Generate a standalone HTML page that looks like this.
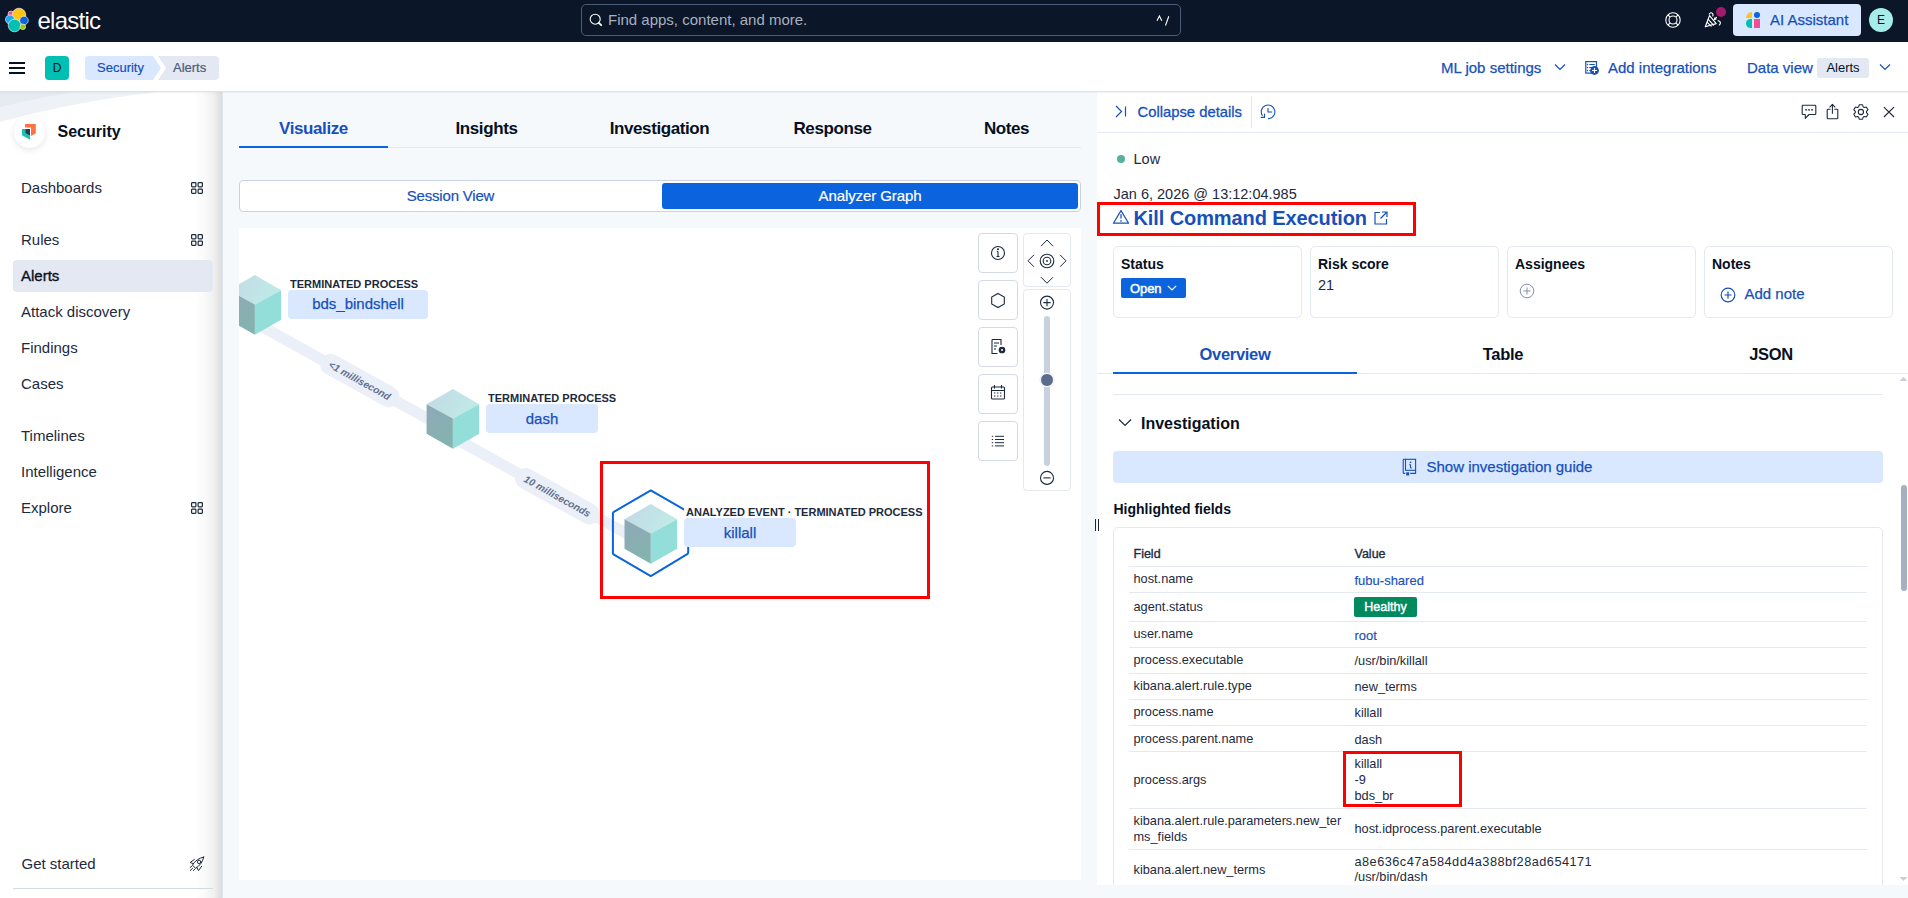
<!DOCTYPE html>
<html><head><meta charset="utf-8">
<style>
*{box-sizing:border-box;margin:0;padding:0}
html,body{width:1908px;height:898px;overflow:hidden;background:#F6F9FC;font-family:"Liberation Sans",sans-serif;color:#1D2A3E}
.a{position:absolute}
.t{position:absolute;white-space:nowrap;line-height:1}
svg{position:absolute;overflow:visible}
</style></head><body>

<!-- TOP DARK HEADER -->
<div class="a" style="left:0;top:0;width:1908px;height:42px;background:#0B1628"></div>
<svg style="left:0;top:0" width="40" height="42" viewBox="0 0 40 42">
  <circle cx="11" cy="14" r="3" fill="#F04E98" stroke="#fff" stroke-width="0.6"/>
  <circle cx="19" cy="15" r="6.8" fill="#FEC514" stroke="#fff" stroke-width="0.6"/>
  <circle cx="10" cy="19.5" r="4.5" fill="#1BA9F5" stroke="#fff" stroke-width="0.6"/>
  <circle cx="24" cy="20.5" r="4.3" fill="#0B64DD" stroke="#fff" stroke-width="0.6"/>
  <circle cx="14.5" cy="25.5" r="6.3" fill="#00BFB3" stroke="#fff" stroke-width="0.6"/>
  <circle cx="22.8" cy="26.8" r="2.8" fill="#93C90E" stroke="#fff" stroke-width="0.6"/>
</svg>
<div class="t" style="left:37.5px;top:8.7px;font-size:24px;letter-spacing:-0.75px;color:#fff">elastic</div>

<div class="a" style="left:581px;top:4px;width:600px;height:32px;border:1px solid #4B5C78;border-radius:5px;background:#0B1628"></div>
<svg style="left:589px;top:13px" width="14" height="14" viewBox="0 0 14 14"><circle cx="6.2" cy="6.2" r="5" fill="none" stroke="#fff" stroke-width="1.1"/><path d="M9.8 9.8 L12.2 12.2" stroke="#fff" stroke-width="1.8" stroke-linecap="round"/></svg>
<div class="t" style="left:608px;top:11.5px;font-size:15px;color:#A8B1C0">Find apps, content, and more.</div>
<svg style="left:1156px;top:15px" width="14" height="12" viewBox="0 0 14 12"><path d="M1 5.8 L3.4 1 L5.8 5.8 M12.8 1.3 L9.5 10.5" fill="none" stroke="#fff" stroke-width="1.1"/></svg>

<!-- help icon -->
<svg style="left:1665px;top:12px" width="16" height="16" viewBox="0 0 16 16"><circle cx="8" cy="8" r="7.2" fill="none" stroke="#fff" stroke-width="1.1"/><circle cx="8" cy="8" r="4" fill="none" stroke="#fff" stroke-width="1.1"/><path d="M3 3 L5.2 5.2 M13 3 L10.8 5.2 M3 13 L5.2 10.8 M13 13 L10.8 10.8" stroke="#fff" stroke-width="1.1"/></svg>
<!-- party icon -->
<svg style="left:1698px;top:6px" width="28" height="28" viewBox="0 0 28 28"><g fill="none" stroke="#fff" stroke-width="1.15" stroke-linecap="round" stroke-linejoin="round">
<path d="M7.3 20.8 L11.5 9.6 L18.2 17.6 Z"/><path d="M10.2 13.4 L15.6 19.2 M9.1 16.4 L13.2 20.2"/>
<path d="M11.3 8.2 Q12.8 5.6 14.6 7.6 Q15.3 8.6 14.8 10"/><path d="M20 14.8 Q22.4 15.2 22.4 17 Q22.1 18.5 21.3 19"/><path d="M18.5 11.3 L16.3 13.6 M16.3 13.6 L16.9 11.8 M16.3 13.6 L18.1 13"/>
</g></svg>
<div class="a" style="left:1716px;top:7px;width:10.4px;height:10.4px;border-radius:50%;background:#A6196B"></div>

<!-- AI Assistant -->
<div class="a" style="left:1733px;top:4px;width:128px;height:32px;border-radius:4px;background:#D9E8FF"></div>
<svg style="left:1746px;top:12px" width="15" height="17" viewBox="0 0 15 17">
  <path d="M6 6 H0 A6 6 0 0 1 6 0 Z" fill="#FEC514"/>
  <circle cx="11" cy="3" r="3" fill="#0B64DD"/>
  <path d="M6 7 V16 H4.5 A4.5 4.5 0 0 1 4.5 7 Z" fill="#00BFB3"/>
  <rect x="8" y="7" width="6" height="9" fill="#F04E98"/>
</svg>
<div class="t" style="left:1770px;top:11.5px;font-size:15px;color:#1750BA;-webkit-text-stroke:0.25px #1750BA">AI Assistant</div>
<div class="a" style="left:1869px;top:8px;width:24px;height:24px;border-radius:50%;background:#A6EDEA"></div>
<div class="t" style="left:1869px;top:14px;width:24px;text-align:center;font-size:12px;color:#07101F">E</div>

<!-- SECOND HEADER -->
<div class="a" style="left:0;top:42px;width:1908px;height:49px;background:#fff"></div>
<div class="a" style="left:9px;top:62px;width:16px;height:2px;background:#07101F"></div>
<div class="a" style="left:9px;top:67px;width:16px;height:2px;background:#07101F"></div>
<div class="a" style="left:9px;top:72px;width:16px;height:2px;background:#07101F"></div>
<div class="a" style="left:45px;top:56px;width:24px;height:24px;border-radius:4px;background:#00BFB3"></div>
<div class="t" style="left:45px;top:62px;width:24px;text-align:center;font-size:12px;color:#07101F">D</div>
<svg style="left:85px;top:56px" width="134" height="24" viewBox="0 0 134 24">
  <path d="M4 0 H68 L76 12 L68 24 H4 A4 4 0 0 1 0 20 V4 A4 4 0 0 1 4 0 Z" fill="#D9E8FF"/>
  <path d="M73 0 H130 A4 4 0 0 1 134 4 V20 A4 4 0 0 1 130 24 H73 L81 12 Z" fill="#E3E8F2"/>
</svg>
<div class="t" style="left:97px;top:61px;font-size:13px;color:#1750BA;-webkit-text-stroke:0.2px #1750BA">Security</div>
<div class="t" style="left:173px;top:61px;font-size:13px;color:#4A5B78;-webkit-text-stroke:0.2px #4A5B78">Alerts</div>

<div class="t" style="left:1441px;top:59.5px;font-size:15px;color:#1750BA;-webkit-text-stroke:0.25px #1750BA">ML job settings</div>
<svg style="left:1554px;top:63px" width="12" height="8" viewBox="0 0 12 8"><path d="M1 1.5 L6 6.5 L11 1.5" fill="none" stroke="#1750BA" stroke-width="1.2"/></svg>
<svg style="left:1585px;top:60px" width="15" height="15" viewBox="0 0 15 15"><rect x="0.8" y="1.6" width="10.7" height="11.5" fill="none" stroke="#1750BA" stroke-width="1.2"/><path d="M4.3 4.5 H9.8 M4.3 7.5 H9.8 M4.3 10.5 H9.8" stroke="#1750BA" stroke-width="1.1"/><circle cx="2.5" cy="4.5" r="0.7" fill="#1750BA"/><circle cx="2.5" cy="7.5" r="0.7" fill="#1750BA"/><circle cx="2.5" cy="10.5" r="0.7" fill="#1750BA"/><circle cx="9.5" cy="10.5" r="4.4" fill="#1750BA"/><path d="M9.5 8 V13 M7 10.5 H12" stroke="#fff" stroke-width="1.1"/></svg>
<div class="t" style="left:1608px;top:59.5px;font-size:15px;color:#1750BA;-webkit-text-stroke:0.25px #1750BA">Add integrations</div>
<div class="t" style="left:1747px;top:59.5px;font-size:15px;color:#1750BA;-webkit-text-stroke:0.25px #1750BA">Data view</div>
<div class="a" style="left:1817px;top:58px;width:52px;height:20px;border-radius:3px;background:#E3E8F2"></div>
<div class="t" style="left:1817px;top:61px;width:52px;text-align:center;font-size:13px;color:#07101F">Alerts</div>
<svg style="left:1879px;top:63px" width="12" height="8" viewBox="0 0 12 8"><path d="M1 1.5 L6 6.5 L11 1.5" fill="none" stroke="#1750BA" stroke-width="1.2"/></svg>

<!--NAV-->
<div class="a" style="left:0;top:91px;width:222px;height:807px;background:#fff"></div>
<div class="a" style="left:222px;top:91px;width:1px;height:807px;background:#E1E6EF"></div>
<svg style="left:0;top:91px" width="223" height="40" viewBox="0 0 223 40"><path d="M0 0 H167 Q80 9 0 31 Z" fill="#EEF1F6"/><path d="M0 0 H82 Q40 6 0 16 Z" fill="#E6EAF1"/></svg>
<div class="a" style="left:195px;top:91px;width:27px;height:807px;background:linear-gradient(90deg,rgba(0,0,0,0) 0%,rgba(0,0,0,0.02) 35%,rgba(0,0,0,0.06) 70%,rgba(0,0,0,0.14) 100%)"></div>
<div class="a" style="left:13.5px;top:116.5px;width:31px;height:31px;border-radius:50%;background:#fff;box-shadow:0 2px 6px rgba(0,0,0,0.10)"></div>
<svg style="left:20px;top:120px" width="20" height="22" viewBox="0 0 20 22">
  <path d="M5.1 4 H15.8 V13.2 L11 16 V7.5 H5.1 Z" fill="#FF7143"/>
  <path d="M2 9 H10 V19.8 L2 15.3 Z" fill="#1BC0B2"/>
  <path d="M5.5 9 H10 V15.6 L5.5 13 Z" fill="#2B3650"/>
</svg>
<div class="t" style="left:57.5px;top:124px;font-size:16px;font-weight:700;color:#07101F">Security</div>

<div class="t" style="left:21px;top:180px;font-size:15px;color:#1D2A3E">Dashboards</div>
<div class="a" style="left:13px;top:260px;width:200px;height:32px;border-radius:4px;background:#E3E8F2"></div>
<div class="t" style="left:21px;top:232px;font-size:15px;color:#1D2A3E">Rules</div>
<div class="t" style="left:21px;top:268px;font-size:15px;color:#07101F;-webkit-text-stroke:0.35px #07101F">Alerts</div>
<div class="t" style="left:21px;top:304px;font-size:15px;color:#1D2A3E">Attack discovery</div>
<div class="t" style="left:21px;top:340px;font-size:15px;color:#1D2A3E">Findings</div>
<div class="t" style="left:21px;top:376px;font-size:15px;color:#1D2A3E">Cases</div>
<div class="t" style="left:21px;top:428px;font-size:15px;color:#1D2A3E">Timelines</div>
<div class="t" style="left:21px;top:464px;font-size:15px;color:#1D2A3E">Intelligence</div>
<div class="t" style="left:21px;top:500px;font-size:15px;color:#1D2A3E">Explore</div>
<svg style="left:191px;top:182px" width="12" height="12" viewBox="0 0 12 12"><g fill="none" stroke="#1D2A3E" stroke-width="1.2"><rect x="0.6" y="0.6" width="4.3" height="4.3" rx="0.8"/><rect x="7.1" y="0.6" width="4.3" height="4.3" rx="0.8"/><rect x="0.6" y="7.1" width="4.3" height="4.3" rx="0.8"/><rect x="7.1" y="7.1" width="4.3" height="4.3" rx="0.8"/></g></svg>
<svg style="left:191px;top:234px" width="12" height="12" viewBox="0 0 12 12"><g fill="none" stroke="#1D2A3E" stroke-width="1.2"><rect x="0.6" y="0.6" width="4.3" height="4.3" rx="0.8"/><rect x="7.1" y="0.6" width="4.3" height="4.3" rx="0.8"/><rect x="0.6" y="7.1" width="4.3" height="4.3" rx="0.8"/><rect x="7.1" y="7.1" width="4.3" height="4.3" rx="0.8"/></g></svg>
<svg style="left:191px;top:502px" width="12" height="12" viewBox="0 0 12 12"><g fill="none" stroke="#1D2A3E" stroke-width="1.2"><rect x="0.6" y="0.6" width="4.3" height="4.3" rx="0.8"/><rect x="7.1" y="0.6" width="4.3" height="4.3" rx="0.8"/><rect x="0.6" y="7.1" width="4.3" height="4.3" rx="0.8"/><rect x="7.1" y="7.1" width="4.3" height="4.3" rx="0.8"/></g></svg>

<div class="t" style="left:21.5px;top:856px;font-size:15px;color:#1D2A3E">Get started</div>
<svg style="left:184px;top:850px" width="26" height="26" viewBox="0 0 26 26"><g fill="none" stroke="#1D2A3E" stroke-width="1" stroke-linejoin="round" stroke-linecap="round"><path d="M19.7 7.1 Q12.5 8.5 8.4 15.1 L11.6 18.3 Q18.3 14.2 19.7 7.1 Z"/><path d="M10.4 9.4 L6.2 12.5 L9.3 13.6"/><path d="M17.7 16.2 L14.5 20.6 L12.8 17.4"/><circle cx="15.1" cy="11.9" r="1.7"/><path d="M6.2 17.4 L7.8 16.2 M6.2 20.5 L8.6 18.3 M9.3 20.5 L11 19"/></g></svg>
<div class="a" style="left:13px;top:888px;width:200px;height:1px;background:#D3DAE6"></div>

<!--MAIN-->
<div class="a" style="left:239px;top:147px;width:842px;height:1px;background:#E3E8F2"></div>
<div class="a" style="left:239px;top:146px;width:149px;height:2px;background:#0B64DD"></div>
<div class="t" style="left:239px;top:120px;width:149px;text-align:center;font-size:17px;font-weight:700;letter-spacing:-0.4px;color:#1750BA">Visualize</div>
<div class="t" style="left:412px;top:120px;width:149px;text-align:center;font-size:17px;font-weight:700;letter-spacing:-0.4px;color:#07101F">Insights</div>
<div class="t" style="left:585px;top:120px;width:149px;text-align:center;font-size:17px;font-weight:700;letter-spacing:-0.4px;color:#07101F">Investigation</div>
<div class="t" style="left:758px;top:120px;width:149px;text-align:center;font-size:17px;font-weight:700;letter-spacing:-0.4px;color:#07101F">Response</div>
<div class="t" style="left:932px;top:120px;width:149px;text-align:center;font-size:17px;font-weight:700;letter-spacing:-0.4px;color:#07101F">Notes</div>

<div class="a" style="left:239px;top:180px;width:842px;height:32px;border:1px solid #CAD3E2;border-radius:4px;background:#fff"></div>
<div class="a" style="left:662px;top:183px;width:416px;height:26px;border-radius:3px;background:#0B64DD"></div>
<div class="t" style="left:240px;top:188px;width:421px;text-align:center;font-size:15px;letter-spacing:-0.2px;color:#1750BA;-webkit-text-stroke:0.2px #1750BA">Session View</div>
<div class="t" style="left:662px;top:188px;width:416px;text-align:center;font-size:15px;letter-spacing:-0.1px;color:#fff;-webkit-text-stroke:0.2px #fff">Analyzer Graph</div>

<div class="a" style="left:239px;top:228px;width:842px;height:652px;background:#fff;overflow:hidden">
<svg style="left:-239px;top:-228px" width="1081" height="880" viewBox="0 0 1081 880">
  <defs>
    <linearGradient id="gt" x1="0" y1="0" x2="1" y2="0.3"><stop offset="0" stop-color="#C3D9E5"/><stop offset="1" stop-color="#BFEAE7"/></linearGradient>
    <linearGradient id="gl" x1="0" y1="0" x2="0.3" y2="1"><stop offset="0" stop-color="#8FA9B8"/><stop offset="1" stop-color="#84B2AE"/></linearGradient>
  </defs>
  <!-- edges -->
  <line x1="200" y1="292.1" x2="470" y2="442.1" stroke="#EAEFF8" stroke-width="11"/>
  <line x1="440" y1="430" x2="660" y2="552.2" stroke="#EAEFF8" stroke-width="11"/>
  <g transform="translate(359.7 380.5) rotate(29.05)"><rect x="-44" y="-10.5" width="88" height="21" rx="10.5" fill="#EAEFF8"/>
    <text x="0" y="3.6" text-anchor="middle" font-family="Liberation Sans" font-size="10" font-weight="700" font-style="italic" fill="#5F7090">&lt;1 millisecond</text></g>
  <g transform="translate(557.4 496.2) rotate(29.05)"><rect x="-47" y="-10.5" width="94" height="21" rx="10.5" fill="#EAEFF8"/>
    <text x="0" y="3.6" text-anchor="middle" font-family="Liberation Sans" font-size="10" font-weight="700" font-style="italic" fill="#5F7090">10 milliseconds</text></g>
  <!-- cubes -->
  <g id="cube1" transform="translate(254.9 275)">
    <path d="M0 0 L26.3 15.2 L0 29.5 L-26.3 15.2 Z" fill="url(#gt)"/>
    <path d="M-26.3 15.2 L0 29.5 L0 59.7 L-26.3 44.7 Z" fill="url(#gl)"/>
    <path d="M0 29.5 L26.3 15.2 L26.3 44.7 L0 59.7 Z" fill="#94DED9"/>
  </g>
  <g transform="translate(452.9 389)">
    <path d="M0 0 L26.3 15.2 L0 29.5 L-26.3 15.2 Z" fill="url(#gt)"/>
    <path d="M-26.3 15.2 L0 29.5 L0 59.7 L-26.3 44.7 Z" fill="url(#gl)"/>
    <path d="M0 29.5 L26.3 15.2 L26.3 44.7 L0 59.7 Z" fill="#94DED9"/>
  </g>
  <path d="M650.8 490.4 L687.2 511.3 Q688.2 511.9 688.2 513 L688.2 552.5 Q688.2 553.6 687.2 554.2 L650.8 576.1 L613.9 554.6 Q612.9 554 612.9 552.9 L612.9 513.5 Q612.9 512.4 613.9 511.8 Z" fill="none" stroke="#0B64DD" stroke-width="2" stroke-linejoin="round"/>
  <g transform="translate(650.8 504)">
    <path d="M0 0 L26.3 15.2 L0 29.5 L-26.3 15.2 Z" fill="url(#gt)"/>
    <path d="M-26.3 15.2 L0 29.5 L0 59.7 L-26.3 44.7 Z" fill="url(#gl)"/>
    <path d="M0 29.5 L26.3 15.2 L26.3 44.7 L0 59.7 Z" fill="#94DED9"/>
  </g>
</svg>
</div>
<!-- node labels -->
<div class="t" style="left:290px;top:278.5px;font-size:11px;font-weight:700;color:#1D2A3E">TERMINATED PROCESS</div>
<div class="a" style="left:288px;top:290px;width:140px;height:29px;border-radius:4px;background:#D9E8FF"></div>
<div class="t" style="left:288px;top:296px;width:140px;text-align:center;font-size:15px;color:#1750BA;-webkit-text-stroke:0.25px #1750BA">bds_bindshell</div>
<div class="t" style="left:488px;top:392.7px;font-size:11px;font-weight:700;color:#1D2A3E">TERMINATED PROCESS</div>
<div class="a" style="left:486px;top:404px;width:112px;height:29px;border-radius:4px;background:#D9E8FF"></div>
<div class="t" style="left:486px;top:410.8px;width:112px;text-align:center;font-size:15px;color:#1750BA;-webkit-text-stroke:0.25px #1750BA">dash</div>
<div class="a" style="left:684px;top:505px;width:242px;height:13px;background:#fff"></div>
<div class="t" style="left:686px;top:506.5px;font-size:11px;font-weight:700;color:#1D2A3E">ANALYZED EVENT · TERMINATED PROCESS</div>
<div class="a" style="left:684px;top:518px;width:112px;height:29px;border-radius:4px;background:#D9E8FF"></div>
<div class="t" style="left:684px;top:525px;width:112px;text-align:center;font-size:15px;color:#1750BA;-webkit-text-stroke:0.25px #1750BA">killall</div>
<!-- red highlight -->
<div class="a" style="left:600px;top:461px;width:330px;height:138px;border:3px solid #FF0000"></div>

<!-- graph controls -->
<div class="a" style="left:978px;top:233px;width:40px;height:40px;border:1px solid #D3DAE6;border-radius:4px;background:#fff"></div>
<div class="a" style="left:978px;top:280px;width:40px;height:40px;border:1px solid #D3DAE6;border-radius:4px;background:#fff"></div>
<div class="a" style="left:978px;top:327px;width:40px;height:40px;border:1px solid #D3DAE6;border-radius:4px;background:#fff"></div>
<div class="a" style="left:978px;top:374px;width:40px;height:40px;border:1px solid #D3DAE6;border-radius:4px;background:#fff"></div>
<div class="a" style="left:978px;top:421px;width:40px;height:40px;border:1px solid #D3DAE6;border-radius:4px;background:#fff"></div>
<div class="a" style="left:1023px;top:233px;width:48px;height:54px;border:1px solid #E3E8F2;border-radius:4px;background:#fff"></div>
<div class="a" style="left:1023px;top:288.5px;width:48px;height:202px;border:1px solid #E3E8F2;border-radius:4px;background:#fff"></div>
<svg style="left:0;top:0" width="1081" height="880" viewBox="0 0 1081 880"><g fill="none" stroke="#1D2A3E" stroke-width="1.1">
  <circle cx="998" cy="253" r="6.5"/><path d="M998 251.5 V256.5 M996.5 256.5 H999.5 M996.8 251.5 H998" stroke-width="1.1"/><circle cx="998" cy="249.2" r="0.5" fill="#1D2A3E"/>
  <path d="M998 293.5 L1004.3 297 V304 L998 307.5 L991.7 304 V297 Z"/>
  <path d="M992 339.5 H1001 V345 M992 339.5 V353.5 H997.5" /><path d="M994 343 H999 M994 346 H997 M994 349 H996"/>
  <circle cx="1002" cy="350" r="2.8" fill="#1D2A3E"/><circle cx="1002" cy="350" r="1" fill="#fff" stroke="none"/>
  <rect x="991.5" y="387" width="13" height="12" rx="1"/><path d="M991.5 390.5 H1004.5 M994.5 385 V388.5 M1001.5 385 V388.5"/>
  <path d="M994 393 h1.4 M997 393 h1.4 M1000 393 h1.4 M994 396 h1.4 M997 396 h1.4 M1000 396 h1.4" stroke-width="1.2"/>
  <path d="M995 436.3 H1004 M995 439.5 H1004 M995 442.7 H1004 M995 445.9 H1004 M991.8 436.3 h1.4 M991.8 439.5 h1.4 M991.8 442.7 h1.4 M991.8 445.9 h1.4" stroke-width="1"/>
  <path d="M1041 246.2 L1047 240 L1053 246.2 M1041 277.2 L1047 283.2 L1053 277.2 M1034 254.8 L1028 260.8 L1034 266.8 M1060 254.8 L1066 260.8 L1060 266.8" stroke-width="1"/>
  <circle cx="1047" cy="261" r="6.8"/><circle cx="1047" cy="261" r="3.8"/><circle cx="1047" cy="261" r="0.9" fill="#1D2A3E" stroke="none"/>
  <circle cx="1047" cy="302.6" r="6.5"/><path d="M1047 299 V306.2 M1043.4 302.6 H1050.6"/>
  <circle cx="1047" cy="477.9" r="6.5"/><path d="M1043.4 477.9 H1050.6"/>
</g></svg>
<div class="a" style="left:1044px;top:316px;width:6px;height:150px;border-radius:3px;background:#C8D1DE"></div>
<div class="a" style="left:1040px;top:372.7px;width:14px;height:14px;border-radius:50%;background:#5A6C8C;border:1.5px solid #fff;box-shadow:0 0 0 0.5px #E3E8F2"></div>

<!--FLYOUT-->
<div class="a" style="left:1097px;top:91px;width:811px;height:794px;background:#fff"></div>
<div class="a" style="left:1097px;top:132px;width:811px;height:1px;background:#E3E8F2"></div>
<svg style="left:1115px;top:105px" width="12" height="14" viewBox="0 0 12 14"><path d="M1 1 L6.5 6.5 L1 12 M10.5 1.5 V11.5" fill="none" stroke="#1750BA" stroke-width="1.2"/></svg>
<div class="t" style="left:1137.5px;top:105px;font-size:14.8px;color:#1750BA;-webkit-text-stroke:0.3px #1750BA">Collapse details</div>
<div class="a" style="left:1251px;top:96px;width:1px;height:32px;background:#E3E8F2"></div>
<svg style="left:1260px;top:104px" width="16" height="16" viewBox="0 0 16 16"><g fill="none" stroke="#1750BA" stroke-width="1.1" stroke-linecap="round"><path d="M8.5 14.6 A6.8 6.8 0 1 0 2.3 11.4"/><path d="M8 4.3 V8 H11.8"/><path d="M4.5 10 V13.4 H1.2"/></g></svg>
<svg style="left:1800px;top:104px" width="96" height="18" viewBox="0 0 96 18"><g fill="none" stroke="#1D2A3E" stroke-width="1.1" stroke-linejoin="round">
  <path d="M3 1.2 H15 Q15.8 1.2 15.8 2 V9.7 Q15.8 10.5 15 10.5 H9 L5.3 14.4 V10.5 H3 Q2.2 10.5 2.2 9.7 V2 Q2.2 1.2 3 1.2 Z"/>
  <path d="M30.5 5.3 H28 Q27.2 5.3 27.2 6.1 V14 Q27.2 14.8 28 14.8 H37 Q37.8 14.8 37.8 14 V6.1 Q37.8 5.3 37 5.3 H34.3 M32.4 9.7 V0.6 M29.5 3.3 L32.4 0.4 L35.3 3.3"/>
  <path d="M63.18 2.88 L62.56 0.79 L59.24 0.79 L58.62 2.88 L57.61 3.47 L55.49 2.95 L53.82 5.84 L55.33 7.41 L55.33 8.59 L53.82 10.16 L55.49 13.05 L57.61 12.53 L58.62 13.12 L59.24 15.21 L62.56 15.21 L63.18 13.12 L64.19 12.53 L66.31 13.05 L67.98 10.16 L66.47 8.59 L66.47 7.41 L67.98 5.84 L66.31 2.95 L64.19 3.47 Z"/><circle cx="60.9" cy="8" r="2.6"/>
  <path d="M83.9 3.1 L94 13 M94 3.1 L83.9 13" stroke-width="1.15"/>
</g><g fill="#1D2A3E"><rect x="5.3" y="5" width="1.5" height="1.6"/><rect x="8.3" y="5" width="1.5" height="1.6"/><rect x="11.3" y="5" width="1.5" height="1.6"/></g></svg>

<div class="a" style="left:1117px;top:155px;width:8px;height:8px;border-radius:50%;background:#54B399"></div>
<div class="t" style="left:1133.5px;top:152.2px;font-size:14.5px;color:#1D2A3E">Low</div>
<div class="t" style="left:1113.5px;top:187.2px;font-size:14.5px;color:#1D2A3E">Jan 6, 2026 @ 13:12:04.985</div>
<svg style="left:1112px;top:209px" width="18" height="16" viewBox="0 0 18 16"><path d="M9 1.6 L16.6 14.2 H1.4 Z" fill="none" stroke="#1750BA" stroke-width="1.2" stroke-linejoin="round"/><path d="M9 5.3 V9.6" stroke="#1750BA" stroke-width="1.3"/><rect x="8.3" y="11.2" width="1.4" height="1.5" fill="#1750BA"/></svg>
<div class="t" style="left:1133.5px;top:208.3px;font-size:20px;font-weight:700;letter-spacing:-0.1px;color:#1750BA">Kill Command Execution</div>
<svg style="left:1374px;top:211px" width="14" height="14" viewBox="0 0 14 14"><g fill="none" stroke="#1750BA" stroke-width="1.2"><path d="M6 1.5 H1 V13 H12.5 V8"/><path d="M8 1 H13 V6 M13 1 L6.5 7.5"/></g></svg>
<div class="a" style="left:1097px;top:202px;width:319px;height:34px;border:3px solid #FF0000"></div>

<div class="a" style="left:1113px;top:246px;width:189px;height:71.5px;border:1px solid #E3E8F2;border-radius:5px"></div>
<div class="a" style="left:1310px;top:246px;width:189px;height:71.5px;border:1px solid #E3E8F2;border-radius:5px"></div>
<div class="a" style="left:1507px;top:246px;width:189px;height:71.5px;border:1px solid #E3E8F2;border-radius:5px"></div>
<div class="a" style="left:1704px;top:246px;width:189px;height:71.5px;border:1px solid #E3E8F2;border-radius:5px"></div>
<div class="t" style="left:1121px;top:257px;font-size:14px;font-weight:700;color:#07101F">Status</div>
<div class="t" style="left:1318px;top:257px;font-size:14px;font-weight:700;color:#07101F">Risk score</div>
<div class="t" style="left:1515px;top:257px;font-size:14px;font-weight:700;color:#07101F">Assignees</div>
<div class="t" style="left:1712px;top:257px;font-size:14px;font-weight:700;color:#07101F">Notes</div>
<div class="a" style="left:1121px;top:278px;width:65px;height:20px;border-radius:2px;background:#0B64DD"></div>
<div class="t" style="left:1130px;top:281.5px;font-size:13px;letter-spacing:-0.1px;color:#fff;-webkit-text-stroke:0.45px #fff">Open</div>
<svg style="left:1167px;top:285px" width="10" height="6" viewBox="0 0 10 6"><path d="M0.8 0.8 L5 5 L9.2 0.8" fill="none" stroke="#fff" stroke-width="1.1"/></svg>
<div class="t" style="left:1318px;top:278.3px;font-size:14.5px;color:#1D2A3E">21</div>
<svg style="left:1519px;top:282.5px" width="16" height="16" viewBox="0 0 16 16"><g fill="none" stroke="#8391AC" stroke-width="1"><circle cx="8" cy="8" r="6.8"/><path d="M8 4.5 V11.5 M4.5 8 H11.5"/></g></svg>
<svg style="left:1720px;top:286.5px" width="16" height="16" viewBox="0 0 16 16"><g fill="none" stroke="#1750BA" stroke-width="1.2"><circle cx="8" cy="8" r="6.8"/><path d="M8 4.5 V11.5 M4.5 8 H11.5"/></g></svg>
<div class="t" style="left:1744.5px;top:286.3px;font-size:15px;color:#1750BA;-webkit-text-stroke:0.25px #1750BA">Add note</div>

<div class="a" style="left:1097px;top:373px;width:811px;height:1px;background:#E3E8F2"></div>
<div class="a" style="left:1113px;top:372px;width:244px;height:2px;background:#0B64DD"></div>
<div class="t" style="left:1113px;top:346px;width:244px;text-align:center;font-size:16.5px;font-weight:700;letter-spacing:-0.3px;color:#1750BA">Overview</div>
<div class="t" style="left:1381px;top:346px;width:244px;text-align:center;font-size:16.5px;font-weight:700;letter-spacing:-0.3px;color:#07101F">Table</div>
<div class="t" style="left:1649px;top:346px;width:244px;text-align:center;font-size:16.5px;font-weight:700;letter-spacing:-0.3px;color:#07101F">JSON</div>
<div class="a" style="left:1113px;top:394px;width:770px;height:1px;background:#E3E8F2"></div>
<svg style="left:1118px;top:418px" width="14" height="10" viewBox="0 0 14 10"><path d="M1 1.5 L7 7.5 L13 1.5" fill="none" stroke="#1D2A3E" stroke-width="1.2"/></svg>
<div class="t" style="left:1141px;top:415.5px;font-size:16px;font-weight:700;color:#07101F">Investigation</div>
<div class="a" style="left:1113px;top:451px;width:770px;height:32px;border-radius:4px;background:#D9E8FF"></div>
<svg style="left:1402px;top:458px" width="15" height="18" viewBox="0 0 15 18"><g fill="none" stroke="#1750BA" stroke-width="1.1"><path d="M3.5 1.3 H1.8 Q1.2 1.3 1.2 1.9 V14.8 Q1.2 15.4 1.8 15.4 H3.3"/><rect x="3.5" y="1.3" width="10.1" height="11"/><path d="M8.2 15.4 H13.6 V12.3"/><path d="M8.5 6.6 V10 M7.4 6.6 H8.5 M8.5 10 H9.8"/></g><circle cx="8.5" cy="4.4" r="0.8" fill="#1750BA"/><rect x="4.2" y="14.3" width="3" height="3.2" fill="#1750BA"/></svg>
<div class="t" style="left:1426.5px;top:458.7px;font-size:15px;color:#1750BA;-webkit-text-stroke:0.25px #1750BA">Show investigation guide</div>
<div class="t" style="left:1113.5px;top:502px;font-size:14px;font-weight:700;color:#07101F">Highlighted fields</div>

<div class="a" style="left:1113px;top:527px;width:770px;height:380px;border:1px solid #E3E8F2;border-radius:5px"></div>
<div class="t" style="left:1133.5px;top:547.8px;font-size:12.5px;color:#1D2A3E;-webkit-text-stroke:0.35px #1D2A3E">Field</div>
<div class="t" style="left:1354.5px;top:547.8px;font-size:12.5px;color:#1D2A3E;-webkit-text-stroke:0.35px #1D2A3E">Value</div>
<div class="a" style="left:1129px;top:566px;width:738px;height:1px;background:#E3E8F2"></div>
<div class="a" style="left:1129px;top:592px;width:738px;height:1px;background:#E3E8F2"></div>
<div class="a" style="left:1129px;top:621px;width:738px;height:1px;background:#E3E8F2"></div>
<div class="a" style="left:1129px;top:647px;width:738px;height:1px;background:#E3E8F2"></div>
<div class="a" style="left:1129px;top:673px;width:738px;height:1px;background:#E3E8F2"></div>
<div class="a" style="left:1129px;top:699px;width:738px;height:1px;background:#E3E8F2"></div>
<div class="a" style="left:1129px;top:725px;width:738px;height:1px;background:#E3E8F2"></div>
<div class="a" style="left:1129px;top:751px;width:738px;height:1px;background:#E3E8F2"></div>
<div class="a" style="left:1129px;top:807.5px;width:738px;height:1px;background:#E3E8F2"></div>
<div class="a" style="left:1129px;top:849px;width:738px;height:1px;background:#E3E8F2"></div>

<div class="t" style="left:1133.5px;top:572.6px;font-size:12.75px;color:#1D2A3E">host.name</div>
<div class="t" style="left:1133.5px;top:600.7px;font-size:12.75px;color:#1D2A3E">agent.status</div>
<div class="t" style="left:1133.5px;top:627.9px;font-size:12.75px;color:#1D2A3E">user.name</div>
<div class="t" style="left:1133.5px;top:653.9px;font-size:12.75px;color:#1D2A3E">process.executable</div>
<div class="t" style="left:1133.5px;top:679.8px;font-size:12.75px;color:#1D2A3E">kibana.alert.rule.type</div>
<div class="t" style="left:1133.5px;top:705.9px;font-size:12.75px;color:#1D2A3E">process.name</div>
<div class="t" style="left:1133.5px;top:733.0px;font-size:12.75px;color:#1D2A3E">process.parent.name</div>
<div class="t" style="left:1133.5px;top:773.9px;font-size:12.75px;color:#1D2A3E">process.args</div>
<div class="t" style="left:1133.5px;top:815.1px;font-size:12.75px;color:#1D2A3E">kibana.alert.rule.parameters.new_ter</div>
<div class="t" style="left:1133.5px;top:830.9px;font-size:12.75px;color:#1D2A3E">ms_fields</div>
<div class="t" style="left:1133.5px;top:863.5px;font-size:12.75px;color:#1D2A3E">kibana.alert.new_terms</div>

<div class="t" style="left:1354.5px;top:574px;font-size:13px;color:#1750BA;-webkit-text-stroke:0.15px #1750BA">fubu-shared</div>
<div class="a" style="left:1354px;top:597px;width:63px;height:20px;border-radius:2px;background:#008A5E"></div>
<div class="t" style="left:1354px;top:601px;width:63px;text-align:center;font-size:12.5px;color:#fff;-webkit-text-stroke:0.4px #fff">Healthy</div>
<div class="t" style="left:1354.5px;top:628.7px;font-size:13px;color:#1750BA;-webkit-text-stroke:0.15px #1750BA">root</div>
<div class="t" style="left:1354.5px;top:654.6px;font-size:12.75px;color:#1D2A3E">/usr/bin/killall</div>
<div class="t" style="left:1354.5px;top:681.3px;font-size:12.75px;color:#1D2A3E">new_terms</div>
<div class="t" style="left:1354.5px;top:706.9px;font-size:12.75px;color:#1D2A3E">killall</div>
<div class="t" style="left:1354.5px;top:733.7px;font-size:12.75px;color:#1D2A3E">dash</div>
<div class="t" style="left:1354.5px;top:757.9px;font-size:12.75px;color:#1D2A3E">killall</div>
<div class="t" style="left:1354.5px;top:773.9px;font-size:12.75px;color:#1D2A3E">-9</div>
<div class="t" style="left:1354.5px;top:789.6px;font-size:12.75px;color:#1D2A3E">bds_br</div>
<div class="t" style="left:1354.5px;top:822.9px;font-size:12.75px;color:#1D2A3E">host.idprocess.parent.executable</div>
<div class="t" style="left:1354.5px;top:855.7px;font-size:12.75px;letter-spacing:0.47px;color:#1D2A3E">a8e636c47a584dd4a388bf28ad654171</div>
<div class="t" style="left:1354.5px;top:871.4px;font-size:12.75px;color:#1D2A3E">/usr/bin/dash</div>
<div class="a" style="left:1343px;top:751px;width:119px;height:56px;border:3px solid #FF0000"></div>

<!-- bottom cover (flyout ends at 885) -->
<div class="a" style="left:1097px;top:885px;width:811px;height:13px;background:#F6F9FC"></div>
<!-- scrollbar -->
<div class="a" style="left:1901px;top:485px;width:6px;height:106px;border-radius:3px;background:#A5B0C0"></div>
<svg style="left:1899px;top:376px" width="9" height="6" viewBox="0 0 9 6"><path d="M0.5 5 L4.5 1 L8.5 5 Z" fill="#C8CFDB"/></svg>
<svg style="left:1899px;top:876px" width="9" height="6" viewBox="0 0 9 6"><path d="M0.5 1 L4.5 5 L8.5 1 Z" fill="#C8CFDB"/></svg>
<!-- resize handle -->
<div class="a" style="left:1095px;top:519px;width:1px;height:12px;background:#1D2A3E"></div>
<div class="a" style="left:1098px;top:519px;width:1px;height:12px;background:#1D2A3E"></div>

<div class="a" style="left:0;top:91px;width:1908px;height:1px;background:#DDE2EA"></div><div class="a" style="left:0;top:92px;width:1908px;height:2px;background:linear-gradient(180deg,rgba(0,20,60,0.05),rgba(0,20,60,0))"></div>
</body></html>
